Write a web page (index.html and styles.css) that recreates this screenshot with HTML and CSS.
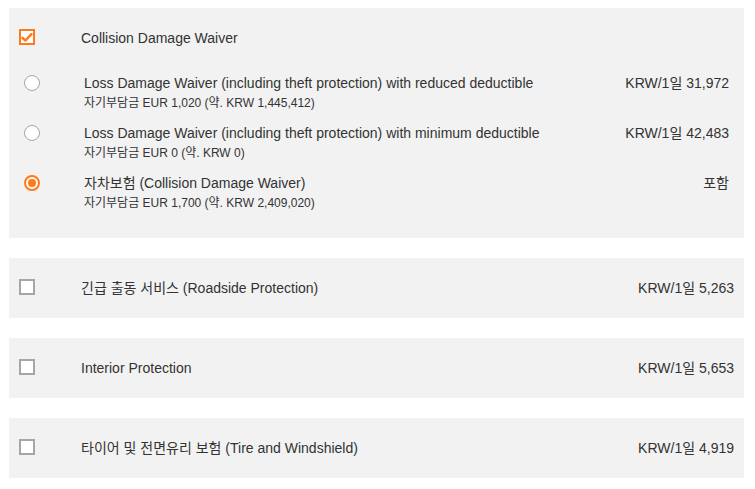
FILE: index.html
```html
<!DOCTYPE html>
<html lang="ko">
<head>
<meta charset="utf-8">
<link rel="stylesheet" href="styles.css">
</head>
<body>
<div class="list">
  <section class="panel panel-big">
    <div class="head">
      <span class="box checked">
        <svg viewBox="0 0 16 16" width="13" height="13"><path d="M2.2 8.6 L6 12 L13.8 3.6" fill="none" stroke="#ff7a1a" stroke-width="3.4" stroke-linecap="round" stroke-linejoin="round"/></svg>
      </span>
      <span class="label">Collision Damage Waiver</span>
    </div>
    <div class="options">
      <div class="option">
        <span class="radio"></span>
        <div class="opt-text">
          <div class="title">Loss Damage Waiver (including theft protection) with reduced deductible</div>
          <div class="sub">자기부담금 EUR 1,020 (약. KRW 1,445,412)</div>
        </div>
        <span class="price">KRW/1일 31,972</span>
      </div>
      <div class="option">
        <span class="radio"></span>
        <div class="opt-text">
          <div class="title">Loss Damage Waiver (including theft protection) with minimum deductible</div>
          <div class="sub">자기부담금 EUR 0 (약. KRW 0)</div>
        </div>
        <span class="price">KRW/1일 42,483</span>
      </div>
      <div class="option">
        <span class="radio selected"></span>
        <div class="opt-text">
          <div class="title">자차보험 (Collision Damage Waiver)</div>
          <div class="sub">자기부담금 EUR 1,700 (약. KRW 2,409,020)</div>
        </div>
        <span class="price">포함</span>
      </div>
    </div>
  </section>
  <section class="panel panel-row">
    <span class="box"></span>
    <span class="label">긴급 출동 서비스 (Roadside Protection)</span>
    <span class="price">KRW/1일 5,263</span>
  </section>
  <section class="panel panel-row">
    <span class="box"></span>
    <span class="label">Interior Protection</span>
    <span class="price">KRW/1일 5,653</span>
  </section>
  <section class="panel panel-row">
    <span class="box"></span>
    <span class="label">타이어 및 전면유리 보험 (Tire and Windshield)</span>
    <span class="price">KRW/1일 4,919</span>
  </section>
</div>
</body>
</html>
```

FILE: styles.css
```css
html, body {
  margin: 0;
  padding: 0;
  background: #ffffff;
}
body {
  font-family: "Liberation Sans", Arial, "Noto Sans CJK KR", sans-serif;
  font-size: 14px;
  color: #333333;
}
.list {
  display: flex;
  flex-direction: column;
  gap: 20px;
  padding: 8px 11px 0 9px;
}
.panel {
  background: #f2f2f2;
}
.box {
  flex: none;
  box-sizing: border-box;
  width: 16px;
  height: 16px;
  border: 2px solid #a6a6a6;
  background: #ffffff;
  display: flex;
  align-items: center;
  justify-content: center;
}
.box.checked {
  border-color: #ff7a1a;
}
.label {
  line-height: 20px;
}
.price {
  margin-left: auto;
  line-height: 20px;
  white-space: nowrap;
}
.panel-big {
  padding: 0 15px 25px 10px;
}
.head {
  display: flex;
  align-items: flex-start;
  height: 40px;
  padding-top: 20px;
}
.head .box {
  margin-top: 1px;
  margin-right: 46px;
}
.options {
  display: flex;
  flex-direction: column;
  gap: 10px;
  padding: 5px 0 0 5px;
}
.option {
  display: flex;
  align-items: flex-start;
}
.radio {
  flex: none;
  box-sizing: border-box;
  width: 16px;
  height: 16px;
  margin-top: 2px;
  margin-right: 44px;
  border-radius: 50%;
  border: 1px solid #a6a6a6;
  background: #ffffff;
  display: flex;
  align-items: center;
  justify-content: center;
}
.radio.selected {
  border: 2px solid #ff7a1a;
}
.radio.selected::after {
  content: "";
  width: 8px;
  height: 8px;
  border-radius: 50%;
  background: #ff7a1a;
}
.title {
  line-height: 20px;
}
.sub {
  font-size: 12px;
  line-height: 20px;
}
.panel-row {
  display: flex;
  align-items: center;
  height: 60px;
  padding: 0 10px;
}
.panel-row .box {
  margin-right: 46px;
  margin-top: -2px;
}
```
